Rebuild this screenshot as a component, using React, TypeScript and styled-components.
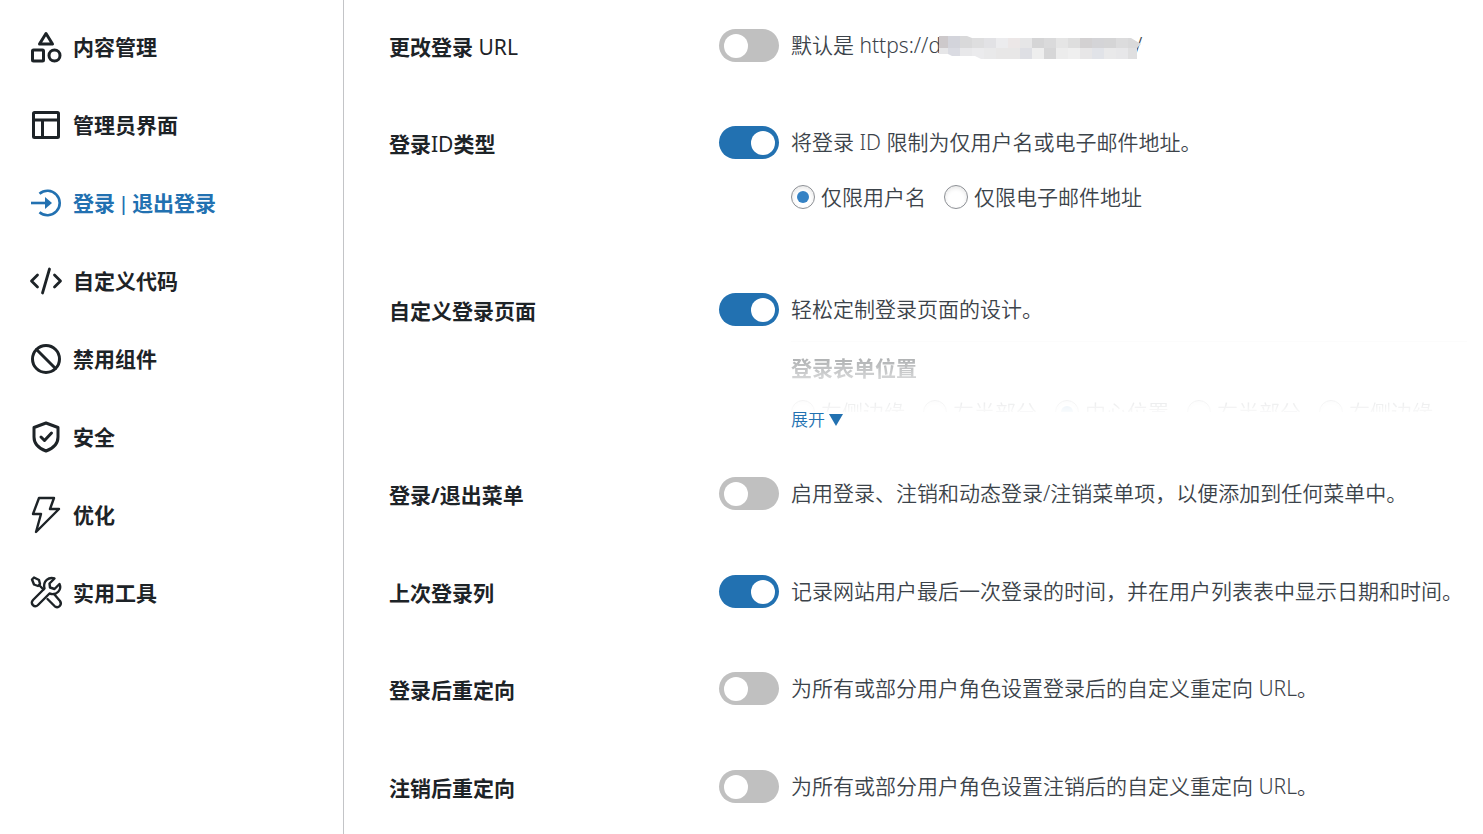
import React from "react";
import styled, { createGlobalStyle } from "styled-components";

const GlobalStyle = createGlobalStyle`
  *, *::before, *::after { box-sizing: border-box; }
  body {
    margin: 0;
    background: #fff;
    color: #3c434a;
    font-family: "Noto Sans", "Noto Sans CJK SC", sans-serif;
    font-size: 21px;
    line-height: 32px;
  }
`;

const Page = styled.div`
  display: flex;
  min-height: 100vh;
`;

const Sidebar = styled.nav`
  flex: 0 0 344px;
  padding-top: 8px;
  border-right: 1px solid #c3c4c7;
`;

const NavItem = styled.a<{ $active?: boolean }>`
  display: flex;
  align-items: center;
  gap: 11px;
  height: 78px;
  padding-left: 30px;
  color: ${(p) => (p.$active ? "#2271b1" : "#1d2327")};
  font-weight: 700;
  text-decoration: none;
`;

const Icon = styled.svg`
  flex: none;
  width: 32px;
  height: 40px;
  overflow: visible;
  fill: none;
  stroke: currentColor;
  stroke-width: 3;
  stroke-linecap: round;
  stroke-linejoin: round;
`;

const Bar = styled.span`
  font-family: "Liberation Sans", sans-serif;
  font-weight: 400;
`;

const Settings = styled.main`
  flex: 1;
  min-width: 0;
  padding: 29px 16px 0 45px;
`;

const Row = styled.section<{ $height?: number }>`
  display: grid;
  grid-template-columns: 330px 60px minmax(0, 1fr);
  align-items: start;
  min-height: ${(p) => p.$height ?? 97}px;
`;

const RowLabel = styled.label`
  padding-top: 2px;
  color: #1d2327;
  font-weight: 700;
`;

const Latin = styled.span`
  font-weight: 400;
`;

const Switch = styled.input`
  appearance: none;
  display: flex;
  align-items: center;
  width: 60px;
  height: 33px;
  margin: 0;
  padding: 0 4px 0 5px;
  border-radius: 17px;
  background: #c0c0c0;
  cursor: pointer;

  &::before {
    content: "";
    width: 24px;
    height: 24px;
    border-radius: 50%;
    background: #fff;
  }

  &:checked {
    justify-content: flex-end;
    background: #2271b1;
  }
`;

const Detail = styled.div`
  padding-left: 12px;
  font-weight: 350;
`;

const Description = styled.p`
  margin: 0;
`;

const Options = styled.div`
  display: flex;
  gap: 18px;
  margin-top: 23px;
  white-space: nowrap;
`;

const Option = styled.label`
  display: flex;
  align-items: center;
  gap: 6px;
`;

const Radio = styled.input`
  appearance: none;
  display: grid;
  place-items: center;
  flex: none;
  width: 24px;
  height: 24px;
  margin: 0;
  border: 1px solid #8c8f94;
  border-radius: 50%;
  background: #fff;
  box-shadow: inset 0 2px 4px rgba(0, 0, 0, 0.1);

  &:checked::before {
    content: "";
    width: 12px;
    height: 12px;
    border-radius: 50%;
    background: #3582c4;
  }
`;

const Preview = styled.div`
  height: 71px;
  margin-top: 16px;
  overflow: hidden;
  border-top: 1px solid #f8f8f8;
  mask-image: linear-gradient(
    rgba(0, 0, 0, 0.46),
    rgba(0, 0, 0, 0.34) 19px,
    rgba(0, 0, 0, 0.2) 36px,
    rgba(0, 0, 0, 0.12) 58px,
    rgba(0, 0, 0, 0.03)
  );

  ${Options} {
    margin-top: 12px;
  }
`;

const PreviewTitle = styled.h3`
  margin: 10px 0 0;
  color: #1d2327;
  font-size: 21px;
  font-weight: 700;
`;

const Expand = styled.button`
  display: flex;
  align-items: center;
  gap: 4px;
  padding: 0;
  border: 0;
  background: none;
  color: #2271b1;
  font: inherit;
  font-size: 17px;
  line-height: 16px;
  cursor: pointer;
`;

const Arrow = styled.svg`
  width: 14px;
  height: 12px;
  fill: currentColor;
`;

const Address = styled.span`
  display: inline-flex;
  align-items: flex-end;
`;

const Mosaic = styled.svg`
  position: relative;
  width: 194px;
  height: 24px;
  margin-bottom: 1px;
  overflow: visible;
`;

const icons = {
  content: (
    <>
      <path d="M16 6.5 L22.5 17 H9.5 Z" />
      <rect x="2.5" y="23" width="11" height="11" rx="1" />
      <circle cx="24.5" cy="28.5" r="5.5" />
    </>
  ),
  layout: (
    <>
      <rect x="3.5" y="7.5" width="25" height="25" rx="1" />
      <path d="M3.5 15 H28.5 M12.5 15 V32.5" />
    </>
  ),
  login: (
    <>
      <path d="M9.500 10.800 A12.200 12.200 0 1 1 9.500 29.200" strokeWidth="2.6" strokeLinecap="butt" />
      <path d="M1 20 H16" strokeLinecap="butt" strokeWidth="2.6" />
      <path d="M15 14 L22 20 L15 26 Z" fill="currentColor" stroke="none" />
    </>
  ),
  code: <path d="M7.500 14 L1.500 20 L7.500 26 M24.500 14 L30.500 20 L24.500 26 M19.5 8 L12.5 32" strokeWidth="2.8" />,
  disable: (
    <>
      <circle cx="16" cy="20" r="13.5" />
      <path d="M6.5 10.5 L25.5 29.5" />
    </>
  ),
  security: (
    <>
      <path d="M16 6 L28 10.5 V20 C28 27 23 31.5 16 34 C9 31.5 4 27 4 20 V10.5 Z" />
      <path d="M11 20 L14.5 23.5 L21.5 16" />
    </>
  ),
  optimize: <path d="M9 3 H24 L20 14 H29 L6 37 L11 19 H3 Z" strokeWidth="2.4" />,
  tools: (
    <g strokeWidth="2.4">
      <path d="M2 6.5 L4 4.5 L9 7 L10 11 L8 13 L4 11.5 Z" />
      <path d="M9.5 12.5 L13.5 16.5" />
      <path d="M24.5 5.5 C19 3.5 12.5 8 14.5 15.5 L3 27 C-.5 30.5 4.500 35.500 8 32 L19.500 20.500 C27 23 32 16.500 29.500 11 L24.500 16 L20 14.500 L19.500 10.500 Z" />
      <path d="M24 21 L30 28 C32.500 32 28.500 35.500 25 33.500 L17.500 26" />
    </g>
  ),
};

const navItems: { icon: keyof typeof icons; text: React.ReactNode; active?: boolean }[] = [
  { icon: "content", text: "内容管理" },
  { icon: "layout", text: "管理员界面" },
  { icon: "login", text: <>登录<Bar> | </Bar>退出登录</>, active: true },
  { icon: "code", text: "自定义代码" },
  { icon: "disable", text: "禁用组件" },
  { icon: "security", text: "安全" },
  { icon: "optimize", text: "优化" },
  { icon: "tools", text: "实用工具" },
];

const positions = ["左侧边缘", "左半部分", "中心位置", "右半部分", "右侧边缘"];

const mosaicTop = ["#cdc9cb", "#d3d4db", "#d9d9da", "#dededf", "#e2e2e5", "#ececee", "#ece7e7", "#e6e6e7", "#d5d5d6", "#dadadb", "#e5e5e5", "#dedede", "#d3d1d2", "#d4d4d7", "#d5d5d6", "#dcdcdd", "#d9d9da", "#d8d8d8"];
const mosaicBottom = ["#e6e6e8", "#dadbe2", "#e8e8ea", "#ebebed", "#e9e9ea", "#e8e7e7", "#e8e7e7", "#dedfe4", "#eeeeee", "#d6d6d7", "#ececec", "#efefef", "#e7e6e7", "#e1e3e8", "#e9e9ea", "#e7e7e9", "#dfdfe0", "#e7e8e9"];

interface SettingProps {
  id: string;
  label: React.ReactNode;
  on?: boolean;
  height?: number;
  text: React.ReactNode;
  children?: React.ReactNode;
}

function Setting({ id, label, on, height, text, children }: SettingProps) {
  return (
    <Row $height={height}>
      <RowLabel htmlFor={id}>{label}</RowLabel>
      <Switch id={id} type="checkbox" role="switch" defaultChecked={on} />
      <Detail>
        <Description>{text}</Description>
        {children}
      </Detail>
    </Row>
  );
}

function HiddenHost() {
  return (
    <Mosaic viewBox="0 0 194 24" aria-hidden="true">
      <clipPath id="smear">
        <path d="M-2 0 H26 L31 2 H190 L200 8 L196 12 V23 H40 L34 20 H11 L7 18 H-2 Z" />
      </clipPath>
      <g clipPath="url(#smear)" shapeRendering="crispEdges">
        {mosaicTop.map((c, i) => (
          <rect key={i} x={i * 12 - 5} y="0" width="12" height="12" fill={c} />
        ))}
        {mosaicBottom.map((c, i) => (
          <rect key={i} x={i * 12 - 5} y="12" width="12" height="12" fill={c} />
        ))}
      </g>
    </Mosaic>
  );
}

export default function App() {
  return (
    <Page lang="zh-CN">
      <GlobalStyle />
      <Sidebar>
        {navItems.map((item) => (
          <NavItem key={item.icon} href={`#${item.icon}`} $active={item.active}>
            <Icon viewBox="0 0 32 40" aria-hidden="true">{icons[item.icon]}</Icon>
            <span>{item.text}</span>
          </NavItem>
        ))}
      </Sidebar>
      <Settings>
        <Setting
          id="login-url"
          label={<>更改登录 <Latin>URL</Latin></>}
          text={<>默认是 <Address>https://d<HiddenHost />/</Address></>}
        />
        <Setting
          id="login-id"
          label={<>登录<Latin>ID</Latin>类型</>}
          on
          height={167}
          text="将登录 ID 限制为仅用户名或电子邮件地址。"
        >
          <Options>
            <Option><Radio type="radio" name="id-type" defaultChecked />仅限用户名</Option>
            <Option><Radio type="radio" name="id-type" />仅限电子邮件地址</Option>
          </Options>
        </Setting>
        <Setting id="login-page" label="自定义登录页面" on height={184} text="轻松定制登录页面的设计。">
          <Preview>
            <PreviewTitle>登录表单位置</PreviewTitle>
            <Options>
              {positions.map((name) => (
                <Option key={name}>
                  <Radio type="radio" name="form-position" defaultChecked={name === "中心位置"} />
                  {name}
                </Option>
              ))}
            </Options>
          </Preview>
          <Expand type="button">
            展开
            <Arrow viewBox="0 0 14 12" aria-hidden="true"><path d="M0 0 H14 L7 12 Z" /></Arrow>
          </Expand>
        </Setting>
        <Setting id="menu" label="登录/退出菜单" height={98} text="启用登录、注销和动态登录/注销菜单项，以便添加到任何菜单中。" />
        <Setting id="last-login" label="上次登录列" on text="记录网站用户最后一次登录的时间，并在用户列表表中显示日期和时间。" />
        <Setting id="after-login" label="登录后重定向" height={98} text="为所有或部分用户角色设置登录后的自定义重定向 URL。" />
        <Setting id="after-logout" label="注销后重定向" height={64} text="为所有或部分用户角色设置注销后的自定义重定向 URL。" />
      </Settings>
    </Page>
  );
}
